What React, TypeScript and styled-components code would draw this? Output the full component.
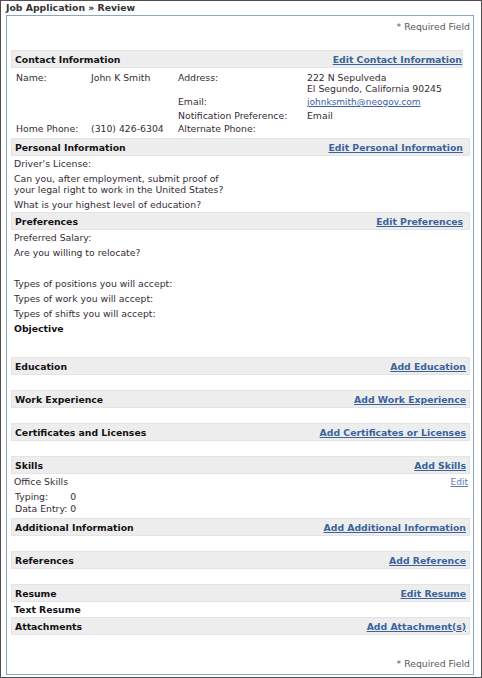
import React from "react";
import styled, { createGlobalStyle } from "styled-components";

const Global = createGlobalStyle`
  html, body { margin: 0; padding: 0; background: #ffffff; }
  body { font-family: "DejaVu Sans", Verdana, sans-serif; color: #352c35; }
`;

const Frame = styled.div`
  width: 482px;
  height: 678px;
  box-sizing: border-box;
  border: 1px solid #4f4f4f;
  display: flex;
  flex-direction: column;
  background: #ffffff;
`;

const PageTitle = styled.div`
  height: 14px;
  line-height: 14px;
  padding-left: 5px;
  font-size: 9.3px;
  font-weight: bold;
  color: #333333;
`;

const Panel = styled.div`
  flex: 1;
  margin: 0 7px 2px 5px;
  border: 1px solid #8ba5c9;
  padding: 0 3px 0 4px;
  display: flex;
  flex-direction: column;
`;

const RequiredNote = styled.div<{ $top?: boolean }>`
  text-align: right;
  font-size: 9.3px;
  line-height: 11px;
  color: #5a5a5a;
  margin: ${(p) => (p.$top ? "5px 0 18px" : "auto 0 5px")};
`;

const HeaderBar = styled.div<{ $narrow?: boolean; $linkPad: number }>`
  height: 18px;
  box-sizing: border-box;
  background: #ededed;
  border: 1px solid #e4e4e4;
  margin-right: ${(p) => (p.$narrow ? "7px" : "0")};
  display: flex;
  align-items: center;
  justify-content: space-between;
  padding: 0 ${(p) => p.$linkPad}px 0 3px;
`;

const HeaderTitle = styled.span`
  font-size: 9.3px;
  font-weight: bold;
  color: #141014;
`;

const HeaderLink = styled.a`
  font-size: 9.3px;
  font-weight: bold;
  color: #3a639c;
  text-decoration: underline;
  cursor: pointer;
`;

const Gap = styled.div<{ $h: number }>`
  height: ${(p) => p.$h}px;
`;

const ContactGrid = styled.div`
  display: grid;
  grid-template-columns: 75px 87px 129px 1fr;
  padding: 3px 0 3px 5px;
  font-size: 9.3px;
  line-height: 11px;
`;

const Cell = styled.div`
  padding: 1px 0;
  white-space: nowrap;
`;

const SmallLink = styled.a<{ $light?: boolean }>`
  font-size: 9px;
  color: ${(p) => (p.$light ? "#6079b8" : "#3b5ea6")};
  text-decoration: underline;
  cursor: pointer;
`;

const Item = styled.div<{ $bold?: boolean; $after?: number }>`
  padding: 2px 0 2px 3px;
  margin-bottom: ${(p) => p.$after ?? 0}px;
  font-size: 9.3px;
  font-weight: ${(p) => (p.$bold ? "bold" : "normal")};
  color: ${(p) => (p.$bold ? "#141014" : "#352c35")};
  line-height: 11px;
`;

const ItemRow = styled.div`
  display: flex;
  justify-content: space-between;
  align-items: center;
  padding-right: 2px;
`;

const SkillTable = styled.div`
  display: grid;
  grid-template-columns: max-content max-content;
  column-gap: 3px;
  padding: 2px 0 3px 4px;
  font-size: 9.3px;
  line-height: 12px;
`;

type SectionProps = {
  title: string;
  link: string;
  narrow?: boolean;
  linkPad?: number;
};

const SectionHeader = ({ title, link, narrow, linkPad = 3 }: SectionProps) => (
  <HeaderBar $narrow={narrow} $linkPad={linkPad}>
    <HeaderTitle>{title}</HeaderTitle>
    <HeaderLink>{link}</HeaderLink>
  </HeaderBar>
);

export default function App() {
  return (
    <>
      <Global />
      <Frame>
        <PageTitle>Job Application » Review</PageTitle>
        <Panel>
          <RequiredNote $top>* Required Field</RequiredNote>

          <SectionHeader title="Contact Information" link="Edit Contact Information" narrow linkPad={0} />
          <ContactGrid>
            <Cell>Name:</Cell>
            <Cell>John K Smith</Cell>
            <Cell>Address:</Cell>
            <Cell>
              222 N Sepulveda
              <br />
              El Segundo, California 90245
            </Cell>
            <Cell />
            <Cell />
            <Cell>Email:</Cell>
            <Cell>
              <SmallLink>johnksmith@neogov.com</SmallLink>
            </Cell>
            <Cell />
            <Cell />
            <Cell>Notification Preference:</Cell>
            <Cell>Email</Cell>
            <Cell>Home Phone:</Cell>
            <Cell>(310) 426-6304</Cell>
            <Cell>Alternate Phone:</Cell>
            <Cell />
          </ContactGrid>

          <SectionHeader title="Personal Information" link="Edit Personal Information" linkPad={6} />
          <Item>Driver's License:</Item>
          <Item>
            Can you, after employment, submit proof of
            <br />
            your legal right to work in the United States?
          </Item>
          <Item>What is your highest level of education?</Item>

          <SectionHeader title="Preferences" link="Edit Preferences" linkPad={6} />
          <Item>Preferred Salary:</Item>
          <Item $after={16}>Are you willing to relocate?</Item>
          <Item>Types of positions you will accept:</Item>
          <Item>Types of work you will accept:</Item>
          <Item>Types of shifts you will accept:</Item>
          <Item $bold $after={21}>Objective</Item>

          <SectionHeader title="Education" link="Add Education" />
          <Gap $h={15} />
          <SectionHeader title="Work Experience" link="Add Work Experience" />
          <Gap $h={15} />
          <SectionHeader title="Certificates and Licenses" link="Add Certificates or Licenses" />
          <Gap $h={15} />
          <SectionHeader title="Skills" link="Add Skills" />
          <ItemRow>
            <Item>Office Skills</Item>
            <SmallLink $light>Edit</SmallLink>
          </ItemRow>
          <SkillTable>
            <span>Typing:</span>
            <span>0</span>
            <span>Data Entry:</span>
            <span>0</span>
          </SkillTable>
          <SectionHeader title="Additional Information" link="Add Additional Information" />
          <Gap $h={15} />
          <SectionHeader title="References" link="Add Reference" />
          <Gap $h={15} />
          <SectionHeader title="Resume" link="Edit Resume" />
          <Item $bold>Text Resume</Item>
          <SectionHeader title="Attachments" link="Add Attachment(s)" />

          <RequiredNote>* Required Field</RequiredNote>
        </Panel>
      </Frame>
    </>
  );
}
